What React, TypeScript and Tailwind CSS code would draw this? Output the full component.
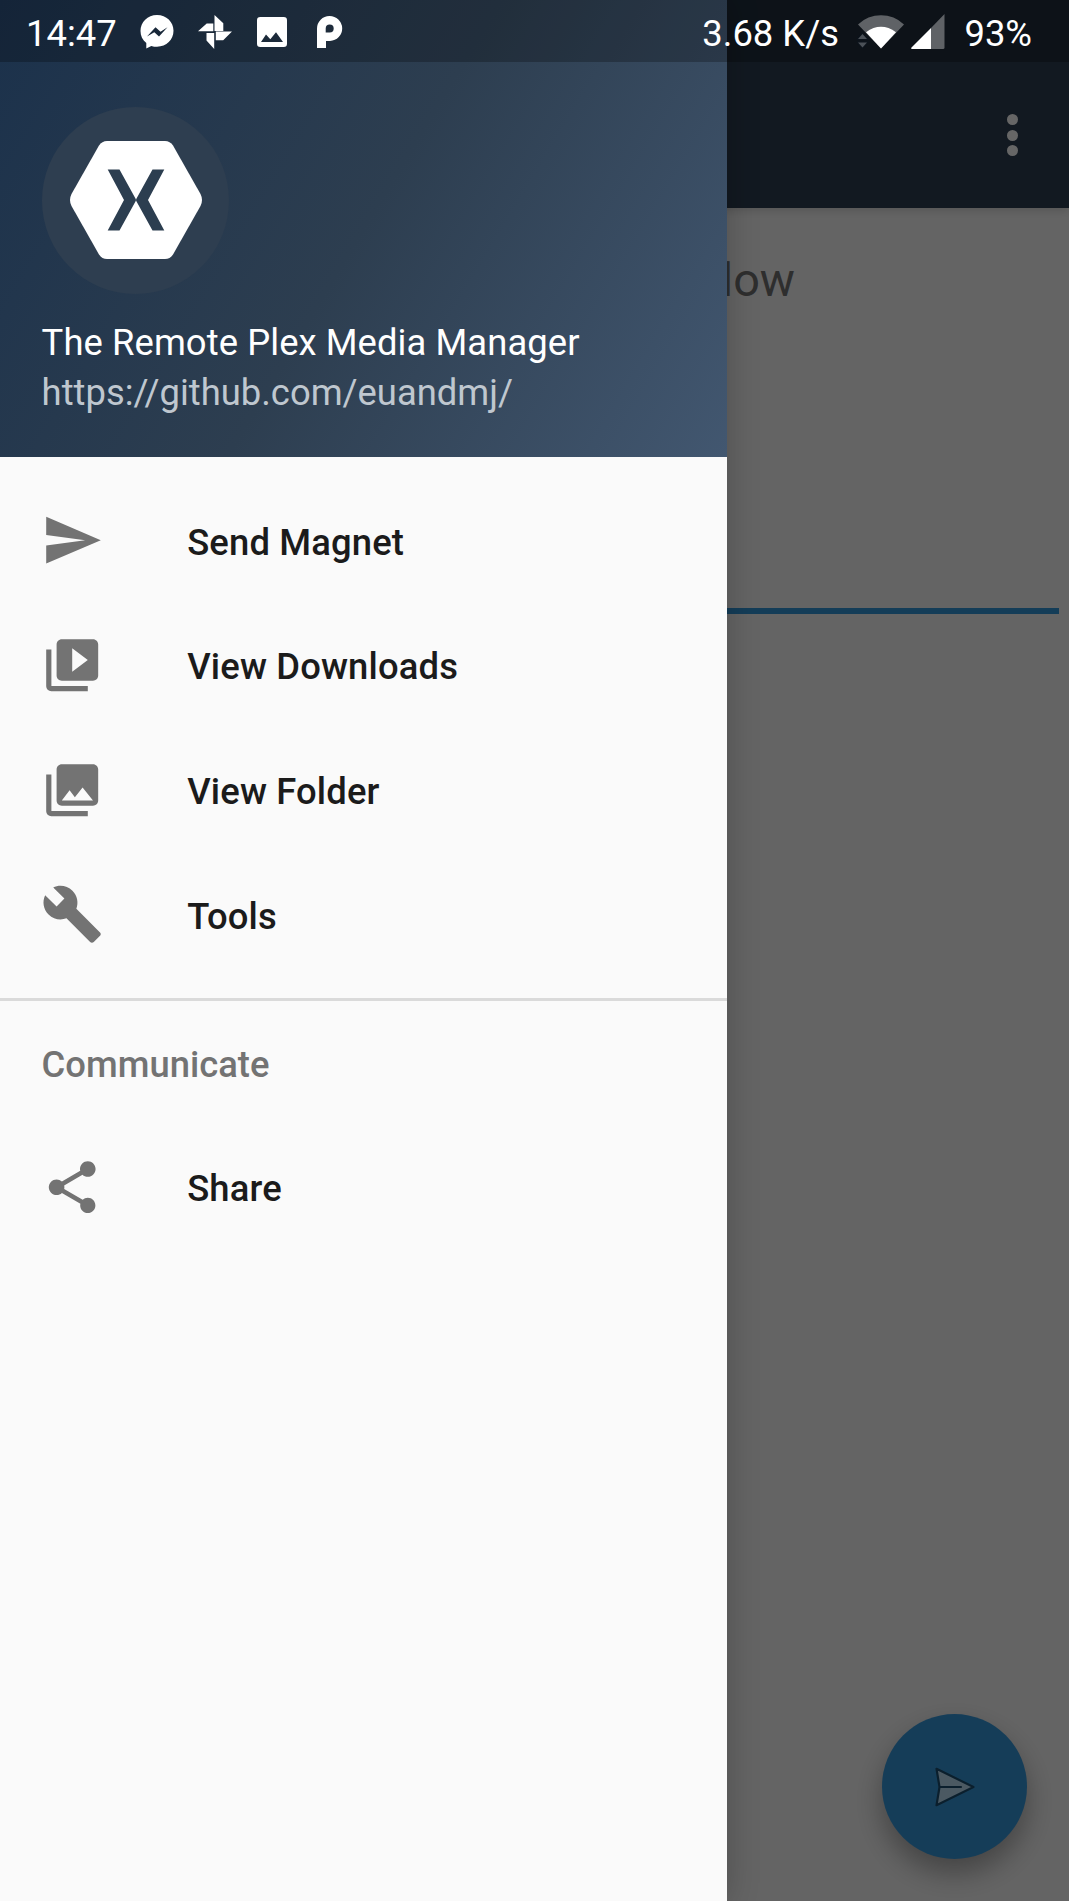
import type { ReactNode } from "react";

const paths = {
  send: "M2.01 21L23 12 2.01 3 2 10l15 2-15 2z",
  video:
    "M4 6H2v14c0 1.1.9 2 2 2h14v-2H4V6zm16-4H8c-1.1 0-2 .9-2 2v12c0 1.1.9 2 2 2h12c1.1 0 2-.9 2-2V4c0-1.1-.9-2-2-2zm-8 12.5v-9l6 4.5-6 4.5z",
  gallery:
    "M22 16V4c0-1.1-.9-2-2-2H8c-1.1 0-2 .9-2 2v12c0 1.1.9 2 2 2h12c1.1 0 2-.9 2-2zm-11-4l2.03 2.71L16 11l4 5H8l3-4zM2 6v14c0 1.1.9 2 2 2h14v-2H4V6H2z",
  wrench:
    "M22.7 19l-9.1-9.1c.9-2.3.4-5-1.5-6.9-2-2-5-2.4-7.4-1.3L9 6 6 9 1.6 4.7C.4 7.1.9 10.1 2.9 12.1c1.9 1.9 4.6 2.4 6.9 1.5l9.1 9.1c.4.4 1 .4 1.4 0l2.3-2.3c.5-.4.5-1.1.1-1.4z",
  share:
    "M18 16.08c-.76 0-1.44.3-1.96.77L8.91 12.7c.05-.23.09-.46.09-.7s-.04-.47-.09-.7l7.05-4.11c.54.5 1.25.81 2.04.81 1.66 0 3-1.34 3-3s-1.34-3-3-3-3 1.34-3 3c0 .24.04.47.09.7L8.04 9.81C7.5 9.31 6.79 9 6 9c-1.66 0-3 1.34-3 3s1.34 3 3 3c.79 0 1.5-.31 2.04-.81l7.12 4.16c-.05.21-.08.43-.08.65 0 1.61 1.31 2.92 2.92 2.92 1.61 0 2.92-1.31 2.92-2.92s-1.31-2.92-2.92-2.92z",
};

function MenuItem({ path, children }: { path: string; children: ReactNode }) {
  return (
    <a className="flex h-[124.7px] items-center pl-[41.4px]">
      <svg viewBox="0 0 24 24" className="size-[62.4px] shrink-0 fill-[#737373]">
        <path d={path} />
      </svg>
      <span className="ml-[83.4px] pt-[4.4px] text-[36.4px] leading-[44px] font-medium tracking-[0.15px] text-[#1b1b1b]">
        {children}
      </span>
    </a>
  );
}

function StatusBar() {
  return (
    <div className="absolute inset-x-0 top-0 flex h-[62px] items-center bg-black/25 pr-[37px] pl-[26px] text-[36.4px] leading-[44px] text-white">
      <span className="w-[93px] pt-[5px]">14:47</span>
      <svg viewBox="0 0 34 34" className="mt-[1px] ml-[21px] size-[34px]">
        <path
          fill="white"
          fillRule="evenodd"
          d="M17 0C7.500 0 .5 7 .5 16c0 5 2 9 5.800 12v5.500l5-2.600c1.800.6 3.700.8 5.700.8 9.500 0 16.500-7 16.500-15.900S26.500 0 17 0zM7 21.500l8.500-9.200 5 4.400 7-4.400-8.500 9.200-4.700-4.200z"
        />
      </svg>
      <svg viewBox="0 0 34 34" className="mt-[1px] ml-[23.5px] size-[34px] fill-white">
        <path d="M16.500 0l8.800 8.300V16h-8.800zM34 16.500l-8.800 8.700H17.800v-8.700zM16.200 34l-7.700-8.600v-7.500h7.700zM0 16.200l8.700-7.700h6.600v7.700z" />
      </svg>
      <svg viewBox="0 0 30 30" className="mt-[1px] ml-[25.5px] size-[30px]">
        <path
          fill="white"
          fillRule="evenodd"
          d="M3.300 0h23.400A3.300 3.300 0 0 1 30 3.300v23.400a3.300 3.300 0 0 1-3.300 3.300H3.300A3.300 3.300 0 0 1 0 26.700V3.300A3.300 3.300 0 0 1 3.300 0zM4 25h22l-7-9.700-5.700 7L9 17.500z"
        />
      </svg>
      <svg viewBox="0 0 26 32" className="mt-[1.5px] ml-[29.5px] h-[32px] w-[26px]">
        <path
          fill="white"
          fillRule="evenodd"
          d="M0 32V12.500A12.600 12.500 0 1 1 13 25H9v7zM12.700 8.600a4 4 0 0 0-4 4V16.600H12.700a4 4 0 0 0 0-8z"
        />
      </svg>
      <span className="ml-auto pt-[5px]">3.68 K/s</span>
      <svg viewBox="0 0 48 36" className="ml-[18px] h-[36px] w-[48px]">
        <path d="M1 11.500A33 33 0 0 1 47 11.500L24 35.500z" fill="white" fillOpacity=".34" />
        <path d="M9 19.200Q24 8.500 39 19.200L24 35.500z" fill="white" />
        <path d="M1 26h9l-4.500-5zM1 29.500h9l-4.500 5z" fill="#0c131b" stroke="#0c131b" strokeWidth="3" />
        <path d="M1 26h9l-4.500-5zM1 29.500h9l-4.500 5z" fill="#4b5158" />
      </svg>
      <svg viewBox="0 0 34 35" className="ml-[6.5px] h-[35px] w-[34px]">
        <path d="M33.500 0v33.500a1.500 1.500 0 0 1-1.500 1.500H20V14z" fill="white" fillOpacity=".34" />
        <path d="M20 14v21H1q-1.500-.5-.5-1.500z" fill="white" />
      </svg>
      <span className="ml-[19px] pt-[5px]">93%</span>
    </div>
  );
}

export default function App() {
  return (
    <div className="relative h-[1901px] w-[1069px] overflow-hidden bg-[#fafafa] font-['Roboto',sans-serif]">
      <main className="flex h-full flex-col">
        <header className="flex h-[208px] items-center justify-end bg-[#2e3f54] pt-[62px] pr-[51.5px] shadow-[0_3px_8px_rgba(0,0,0,0.14)]">
          <div className="flex flex-col gap-[4.500px]">
            <span className="size-[11px] rounded-full bg-white" />
            <span className="size-[11px] rounded-full bg-white" />
            <span className="size-[11px] rounded-full bg-white" />
          </div>
        </header>
        <p className="mt-[44px] pr-[274px] text-right text-[46.8px] leading-[56px] text-[#737373]">Enter a magnet link below</p>
        <div className="mx-[10px] mt-[300px] h-[6px] bg-[#3498db]" />
        <button className="mt-auto mr-[42px] mb-[42px] flex size-[145px] items-center justify-center self-end rounded-full bg-[#3699dd] shadow-[0_14px_28px_rgba(0,0,0,0.32)]">
          <svg viewBox="0 0 40 40" className="size-[40px]">
            <path
              d="M1.500 1.800L38.500 20 1.500 38.200 4.500 20zM4.500 20H26"
              fill="#bcdff5"
              stroke="#1c4f70"
              strokeWidth="2.200"
              strokeLinejoin="round"
              strokeLinecap="round"
            />
          </svg>
        </button>
      </main>

      <div className="absolute inset-0 bg-black/60" />

      <nav className="absolute inset-y-0 left-0 w-[727.4px] bg-[#fafafa] shadow-[0_0_30px_rgba(0,0,0,0.22)]">
        <div className="flex h-[457px] flex-col bg-linear-[121deg] from-[#1b314b] via-[#2d3e50] to-[#425770] pt-[107px] pl-[41.600px]">
          <div className="flex size-[187px] items-center justify-center rounded-full bg-[#2e3e50]">
            <svg viewBox="0 0 132 118" className="-mt-[1px] ml-[2px] h-[118px] w-[132px]">
              <path
                d="M37 0H95Q100 0 103 4.500L130.500 53Q133.500 59 130.500 65L103 113.500Q100 118 95 118H37Q32 118 29 113.500L1.500 65Q-1.500 59 1.500 53L29 4.500Q32 0 37 0Z"
                fill="white"
              />
              <path d="M37.700 28.500H49.500L66.300 59 49.500 89.500H37.700L54 59zM94.300 28.500H82.500L65.700 59 82.500 89.500H94.300L78 59z" fill="#2c3e50" />
            </svg>
          </div>
          <p className="mt-[26.5px] text-[36.400px] leading-[44px] tracking-[0.08px] text-white">The Remote Plex Media Manager</p>
          <p className="mt-[6.5px] text-[36.400px] leading-[44px] text-[#bfc7cf]">https://github.com/euandmj/</p>
        </div>
        <div className="pt-[21px] pb-[21px]">
          <MenuItem path={paths.send}>Send Magnet</MenuItem>
          <MenuItem path={paths.video}>View Downloads</MenuItem>
          <MenuItem path={paths.gallery}>View Folder</MenuItem>
          <MenuItem path={paths.wrench}>Tools</MenuItem>
        </div>
        <div className="h-[3px] bg-[#dadada]" />
        <h2 className="flex h-[124px] items-center pt-[5px] pl-[41.600px] text-[36.400px] leading-[44px] font-medium text-[#737373]">
          Communicate
        </h2>
        <MenuItem path={paths.share}>Share</MenuItem>
      </nav>

      <StatusBar />
    </div>
  );
}
